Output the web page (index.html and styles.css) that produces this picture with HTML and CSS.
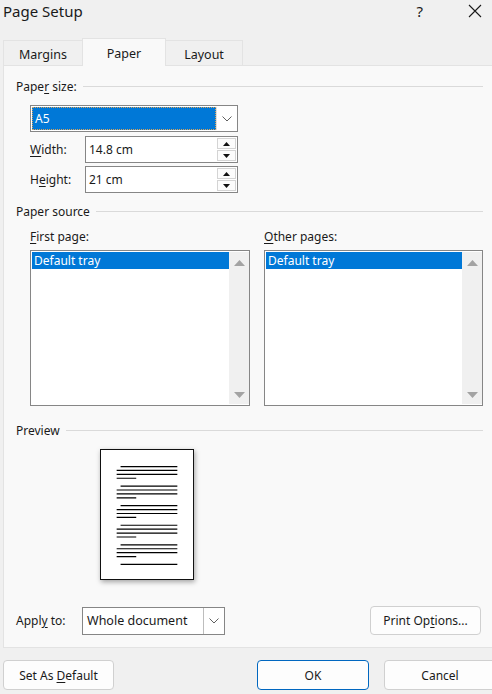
FILE: index.html
```html
<!DOCTYPE html>
<html>
<head>
<meta charset="utf-8">
<link rel="stylesheet" href="styles.css">
</head>
<body>
<div class="dialog">
  <div class="titlebar">
    <span class="title">Page Setup</span>
    <span class="help">?</span>
    <svg class="close" width="14" height="14" viewBox="0 0 14 14"><path d="M1 1 L13 13 M13 1 L1 13" stroke="#1a1a1a" stroke-width="1.1" fill="none"/></svg>
  </div>
  <div class="tabs">
    <div class="tab tab-margins">Margins</div>
    <div class="tab tab-paper active">Paper</div>
    <div class="tab tab-layout">Layout</div>
  </div>
  <div class="panel">
    <div class="group-head head-size"><span>Pape<u>r</u> size:</span><div class="rule"></div></div>
    <div class="indent">
      <div class="combo combo-size">
        <div class="combo-value selected"><span class="focus">A5</span></div>
        <div class="combo-btn"><svg width="10" height="6" viewBox="0 0 10 6"><path d="M0.5 0.5 L5 5 L9.5 0.5" stroke="#606060" fill="none" stroke-width="1"/></svg></div>
      </div>
      <div class="spin-row row-width">
        <span class="spin-label"><u>W</u>idth:</span>
        <div class="spin">
          <span class="spin-value">14.8 cm</span>
          <div class="spin-btns">
            <div class="spin-btn"><svg width="7" height="4" viewBox="0 0 7 4"><path d="M3.5 0 L7 4 L0 4Z" fill="#111"/></svg></div>
            <div class="spin-btn"><svg width="7" height="4" viewBox="0 0 7 4"><path d="M0 0 L7 0 L3.5 4Z" fill="#111"/></svg></div>
          </div>
        </div>
      </div>
      <div class="spin-row row-height">
        <span class="spin-label">H<u>e</u>ight:</span>
        <div class="spin">
          <span class="spin-value">21 cm</span>
          <div class="spin-btns">
            <div class="spin-btn"><svg width="7" height="4" viewBox="0 0 7 4"><path d="M3.5 0 L7 4 L0 4Z" fill="#111"/></svg></div>
            <div class="spin-btn"><svg width="7" height="4" viewBox="0 0 7 4"><path d="M0 0 L7 0 L3.5 4Z" fill="#111"/></svg></div>
          </div>
        </div>
      </div>
    </div>
    <div class="group-head head-source"><span>Paper source</span><div class="rule"></div></div>
    <div class="indent sources">
      <div class="source">
        <div class="list-label"><u>F</u>irst page:</div>
        <div class="listbox">
          <div class="list-items"><div class="list-item selected">Default tray</div></div>
          <div class="scrollbar">
            <svg width="11" height="6" viewBox="0 0 11 6"><path d="M5.5 0 L11 6 L0 6Z" fill="#a3a3a3"/></svg>
            <svg width="11" height="6" viewBox="0 0 11 6"><path d="M0 0 L11 0 L5.5 6Z" fill="#a3a3a3"/></svg>
          </div>
        </div>
      </div>
      <div class="source">
        <div class="list-label"><u>O</u>ther pages:</div>
        <div class="listbox">
          <div class="list-items"><div class="list-item selected">Default tray</div></div>
          <div class="scrollbar">
            <svg width="11" height="6" viewBox="0 0 11 6"><path d="M5.5 0 L11 6 L0 6Z" fill="#a3a3a3"/></svg>
            <svg width="11" height="6" viewBox="0 0 11 6"><path d="M0 0 L11 0 L5.5 6Z" fill="#a3a3a3"/></svg>
          </div>
        </div>
      </div>
    </div>
    <div class="group-head head-preview"><span>Preview</span><div class="rule"></div></div>
    <div class="preview">
      <svg width="94" height="131" viewBox="0 0 94 131" class="page-lines">
        <g stroke="#000" stroke-width="1.2">
          <path d="M20 16.5 H78 M16 20.5 H78 M16 24.5 H78 M16 28.5 H36"/>
          <path d="M20 36.5 H78 M16 40.5 H78 M16 44.5 H78 M16 48.5 H36"/>
          <path d="M20 56.5 H78 M16 60.5 H78 M16 64.5 H78 M16 68.5 H36"/>
          <path d="M20 76.5 H78 M16 80.5 H78 M16 84.5 H78 M16 88.5 H36"/>
          <path d="M20 96.5 H78 M16 100.5 H78 M16 104.5 H78 M16 108.5 H36"/>
          <path d="M20 116.5 H78"/>
        </g>
      </svg>
    </div>
    <div class="apply-row">
      <div class="apply-left">
        <span class="apply-label">Appl<u>y</u> to:</span>
        <div class="combo combo-apply">
          <div class="combo-value">Whole document</div>
          <div class="combo-btn"><svg width="10" height="6" viewBox="0 0 10 6"><path d="M0.5 0.5 L5 5 L9.5 0.5" stroke="#606060" fill="none" stroke-width="1"/></svg></div>
        </div>
      </div>
      <div class="button btn-print"><span>Print Op<u>t</u>ions...</span></div>
    </div>
  </div>
  <div class="actions">
    <div class="button btn-default"><span>Set As <u>D</u>efault</span></div>
    <div class="button btn-ok"><span>OK</span></div>
    <div class="button btn-cancel"><span>Cancel</span></div>
  </div>
</div>
</body>
</html>
```
FILE: styles.css
```css
html, body {
  margin: 0;
  padding: 0;
  overflow: hidden;
}
body {
  background: #f0f0f0;
  font-family: "Noto Sans", "Open Sans", sans-serif;
  font-size: 12px;
  color: #1a1a1a;
  width: 492px;
  height: 694px;
}
u { text-decoration: underline; text-underline-offset: 2px; }

.titlebar {
  height: 38px;
  display: flex;
  align-items: flex-start;
}
.title {
  margin-left: 3px;
  font-size: 15px;
  line-height: 22px;
  color: #1a1a1a;
}
.help {
  margin-left: auto;
  margin-right: 45px;
  font-size: 15px;
  line-height: 22px;
}
.close {
  margin-top: 4px;
  margin-right: 10px;
}

.tabs {
  display: flex;
  align-items: flex-end;
  height: 27px;
  margin-left: 3px;
  position: relative;
  z-index: 2;
}
.tab {
  box-sizing: border-box;
  height: 25px;
  border: 1px solid #e3e3e3;
  border-bottom: none;
  background: #f0f0f0;
  display: flex;
  align-items: center;
  justify-content: center;
  font-size: 12.5px;
  padding-top: 2px;
}
.tab-margins { width: 79px; border-right: none; }
.tab-paper {
  width: 84px;
  height: 28px;
  margin-bottom: -1px;
  background: #f9f9f9;
  padding-bottom: 1px;
}
.tab-layout { width: 77px; border-left: none; }

.panel {
  box-sizing: border-box;
  margin-left: 3px;
  width: 492px;
  height: 583px;
  background: #f9f9f9;
  border: 1px solid #e3e3e3;
  padding: 13px 11px 0 12px;
  position: relative;
  z-index: 1;
}
.group-head {
  display: flex;
  align-items: center;
  height: 16px;
  line-height: 16px;
  gap: 6px;
}
.rule {
  flex: 1;
  height: 1px;
  background: #dadada;
  margin-top: -2px;
}
.indent { margin-left: 14px; }

.combo {
  box-sizing: border-box;
  display: flex;
  border: 1px solid #868686;
  background: #fff;
}
.combo-size {
  width: 208px;
  height: 27px;
  margin-top: 10px;
  padding: 1px 0 1px 1px;
}
.combo-value {
  flex: 1;
  display: flex;
  align-items: center;
  padding-left: 3px;
}
.combo-value.selected {
  background: #0078d7;
  color: #fff;
  padding: 0;
}
.focus {
  box-sizing: border-box;
  display: flex;
  align-items: center;
  width: 100%;
  height: 100%;
  border: 1px dotted #d9a35a;
  padding-left: 2px;
}
.combo-btn {
  width: 20px;
  display: flex;
  align-items: center;
  justify-content: center;
  background: #fff;
  border-left: 1px solid #e0e0e0;
}

.spin-row {
  display: flex;
  align-items: center;
  height: 27px;
  margin-top: 4px;
}
.row-height { margin-top: 3px; }
.spin-label { width: 55px; }
.spin {
  box-sizing: border-box;
  width: 153px;
  height: 27px;
  border: 1px solid #868686;
  background: #fff;
  display: flex;
  align-items: center;
  padding: 1px;
}
.spin-value { flex: 1; padding-left: 2px; }
.spin-btns {
  width: 19px;
  height: 23px;
  display: flex;
  flex-direction: column;
  gap: 1px;
}
.spin-btn {
  flex: 1;
  box-sizing: border-box;
  border: 1px solid #d4d4d4;
  background: #fcfcfc;
  display: flex;
  align-items: center;
  justify-content: center;
}

.head-source { margin-top: 11px; }
.sources {
  display: grid;
  grid-template-columns: 220px 219px;
  column-gap: 14px;
}
.list-label {
  height: 16px;
  line-height: 16px;
  margin-top: 9px;
}
.listbox {
  box-sizing: border-box;
  margin-top: 5px;
  height: 156px;
  border: 1px solid #868686;
  background: #fff;
  display: flex;
  padding: 1px 0 1px 1px;
}
.list-items { flex: 1; }
.list-item {
  height: 17px;
  line-height: 17px;
  padding-left: 2px;
}
.list-item.selected { background: #0078d7; color: #fff; }
.scrollbar {
  width: 20px;
  background: #f0f0f0;
  display: flex;
  flex-direction: column;
  justify-content: space-between;
  align-items: center;
  padding: 8px 0 6px;
  box-sizing: border-box;
}

.head-preview { margin-top: 17px; }
.preview {
  margin-top: 10px;
  margin-left: 84px;
  width: 94px;
  height: 131px;
}
.page-lines {
  display: block;
  box-sizing: border-box;
  background: #fff;
  border: 1px solid #111;
  box-shadow: 1px 2px 5px rgba(0,0,0,0.35);
}

.apply-row {
  margin-top: 26px;
  display: flex;
  align-items: center;
  justify-content: space-between;
  margin-right: 2px;
}
.apply-left { display: flex; align-items: center; }
.apply-label { width: 66px; }
.combo-apply {
  width: 143px;
  height: 28px;
}
.combo-apply .combo-value { padding-left: 4px; font-size: 12.5px; }
.combo-apply .combo-btn { border-left: 1px solid #bdbdbd; }

.button {
  box-sizing: border-box;
  display: flex;
  align-items: center;
  justify-content: center;
  background: #fdfdfd;
  border: 1px solid #d0d0d0;
  border-radius: 4px;
  height: 29px;
}
.btn-print { width: 111px; }

.actions {
  box-sizing: border-box;
  display: flex;
  margin-top: 12px;
  padding-left: 3px;
  width: 496px;
}
.btn-default { width: 111px; height: 30px; margin-right: auto; }
.btn-ok {
  width: 112px;
  height: 30px;
  border-color: #0067c0;
}
.btn-cancel { width: 112px; height: 30px; margin-left: 15px; }
```
